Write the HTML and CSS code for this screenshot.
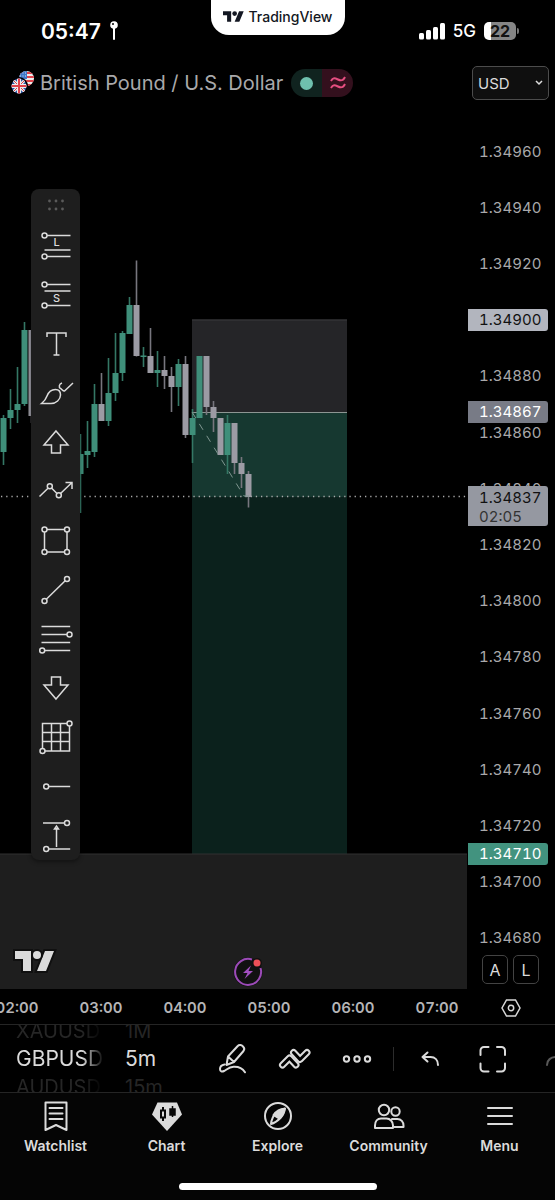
FILE: index.html
```html
<!DOCTYPE html>
<html lang="en">
<head>
<meta charset="utf-8">
<meta name="viewport" content="width=device-width, initial-scale=1">
<title>GBPUSD chart</title>
<link rel="stylesheet" href="styles.css">
</head>
<body>
<div class="app">
  <header class="status">
    <div class="status-side">
      <span class="clock">05:47</span>
      <svg class="pin" width="10" height="20" viewBox="0 0 10 20"><circle cx="5" cy="4" r="3.8" fill="#fff"/><circle cx="4" cy="3" r="1" fill="#000"/><path d="M5 7v11" stroke="#fff" stroke-width="2" stroke-linecap="round"/></svg>
    </div>
    <div class="brand">
      <svg width="21" height="11" viewBox="0 4 36 18" fill="#131722"><path d="M14 22H7V11H0V4h14zM28 22h-8l7.500-18h8z"/><circle cx="20" cy="8" r="4"/></svg>
      <span>TradingView</span>
    </div>
    <div class="status-side status-right">
      <svg width="26" height="17" viewBox="0 0 26 17" fill="#fff"><rect x="0" y="10" width="5" height="6.500" rx="1.500"/><rect x="7" y="7" width="5" height="9.500" rx="1.500"/><rect x="14" y="4" width="5" height="12.500" rx="1.500"/><rect x="21" y="0" width="5" height="16.500" rx="1.500"/></svg>
      <span class="network">5G</span>
      <span class="battery">22</span>
    </div>
  </header>

  <div class="symbol">
    <svg class="flags" width="24" height="26" viewBox="0 0 24 26">
      <defs>
        <clipPath id="us"><circle cx="15.500" cy="8.500" r="7.500"/></clipPath>
        <clipPath id="gb"><circle cx="8" cy="16" r="7.500"/></clipPath>
      </defs>
      <g clip-path="url(#us)"><rect width="24" height="20" fill="#eee"/><path d="M8 3h16M8 7h16M8 11h16M8 15h16" stroke="#e0434c" stroke-width="2"/><rect x="7" y="0" width="9" height="9" fill="#3f78c9"/><path d="M9 3h6M9 6h6" stroke="#cfe0f5" stroke-dasharray="1 1.500"/></g>
      <circle cx="8" cy="16" r="9" fill="#000"/>
      <g clip-path="url(#gb)"><rect y="8" width="16" height="16" fill="#2d55a5"/><path d="M0 8l16 16M16 8L0 24" stroke="#eee" stroke-width="3"/><path d="M0 8l16 16M16 8L0 24" stroke="#d8434c"/><path d="M8 8v16M0 16h16" stroke="#eee" stroke-width="4"/><path d="M8 8v16M0 16h16" stroke="#e0434c" stroke-width="2"/></g>
    </svg>
    <h1 class="symbol-name">British Pound / U.S. Dollar</h1>
    <div class="market">
      <span class="market-open"><i class="dot"></i></span>
      <span class="market-type"><svg width="16" height="14" viewBox="0 0 16 14" fill="none" stroke="#e54e80" stroke-width="2"><path d="M1 5C3 1 5 2 8 3.500S13 5 15 1M1 12c2-4 4-3 7-1.500s5 1.500 7-2.500"/></svg></span>
    </div>
    <label class="currency">
      <select aria-label="Currency"><option>USD</option></select>
      <svg width="8" height="6" viewBox="0 0 8 6" fill="none" stroke="#ddd" stroke-width="1.500"><path d="M1 1l3 3 3-3"/></svg>
    </label>
  </div>

  <main class="chart">
    <div class="plot">
      <svg class="canvas" width="100%" height="100%" fill="none">
        <g transform="translate(0 -104)">
          <rect y="854" width="100%" height="135" fill="#1e1e1e"/>
          <path d="M192 319.500h155V412H192z" fill="#252528"/>
          <path d="M192 320h155" stroke="#3a3a3d"/>
          <path d="M192 412h155v85H192z" fill="#163830"/>
          <path d="M192 497h155v357H192z" fill="#0b211c"/>
          <line x1="0" y1="854" x2="100%" y2="854" stroke="#303030"/>
          <path d="M192 412.500h155" stroke="#8d9693"/>
          <line x1="1" y1="496.500" x2="100%" y2="496.500" stroke="#aaa" stroke-width="1.300" stroke-dasharray="1.300 3.900"/>
          <path stroke="#347765" stroke-width="1.600" d="M3.500 415v50M10.500 389v40M17.500 367v56M24.500 322v84M80.500 434v79M87.500 421v47M94.500 384v73M108.500 358v68M115.500 333v68M122.500 331v50M129.500 297v37M143.500 347v20M157.500 351v36M178.500 359v47M192.500 409v54M227.500 415v59"/>
          <path stroke="#3f8f7a" stroke-width="6" d="M3.500 418v34M10.500 410v8M17.500 404v6M24.500 330v74M80.500 454v20M87.500 451v4M94.500 404v48M108.500 393v28M115.500 373v20M122.500 333v40M129.500 305v29M143.500 355.500v1.500M157.500 370v3M178.500 364v23M192.500 418v17M199.500 356v62M227.500 423v32"/>
          <path stroke="#77767e" stroke-width="1.600" d="M31.500 330v93M101.500 373v48M136.500 260.500v96M150.500 328v45M164.500 356v33M171.500 367v45M185.500 356v82M206.500 356v59M213.500 401v31M234.500 423v51M241.500 457v31M248.500 471v36.500"/>
          <path stroke="#9c9ba4" stroke-width="6" d="M31.500 330v86M101.500 404v17M136.500 305v51M150.500 356v17M164.500 370v6M171.500 376v11M185.500 364v71M206.500 356v51M213.500 407v11M220.500 418v37M234.500 423v40M241.500 463v11M248.500 474v23"/>
          <path d="M192 412l52 84h5" stroke="#7f9690" stroke-dasharray="7 7"/>
        </g>
      </svg>
      <svg class="watermark" width="45" height="26" viewBox="-3 -3 45 26"><g fill="#dbdbdb" stroke="#101010" stroke-width="4" paint-order="stroke"><path d="M16 20H8V8H0V0h16zM31 20h-9l8-20h9z"/><circle cx="22" cy="4" r="4"/></g></svg>
      <svg class="spark" width="32" height="32" viewBox="0 0 32 32" fill="none"><circle cx="16" cy="16" r="14.500" fill="#111"/><path d="M20 3.500A13 13 0 1 0 28.500 12" stroke="#9c4bb8" stroke-width="2"/><path d="M19 9.500l-8 7.500h4.500l-3 6 8.500-8h-4.500z" fill="#a24fc0"/><circle cx="25" cy="7" r="5" fill="#111"/><circle cx="25" cy="7" r="3.500" fill="#ee5058"/></svg>

      <div class="tools" role="toolbar" aria-label="Drawing tools">
        <div class="grip"><svg width="18" height="12" viewBox="0 0 18 12" fill="#5a5a5a"><circle cx="2.500" cy="2" r="1.400"/><circle cx="9" cy="2" r="1.400"/><circle cx="15.500" cy="2" r="1.400"/><circle cx="2.500" cy="10" r="1.400"/><circle cx="9" cy="10" r="1.400"/><circle cx="15.500" cy="10" r="1.400"/></svg></div>
        <button aria-label="Long position"><svg class="icon" viewBox="0 0 34 34"><circle cx="5.500" cy="6.500" r="2.500"/><circle cx="5.500" cy="27.500" r="2.500"/><path d="M8 6.500h23.500M5.500 21h26M8 27.500h23.500"/><text class="icon-letter" x="17.500" y="17">L</text></svg></button>
        <button aria-label="Short position"><svg class="icon" viewBox="0 0 34 34"><circle cx="5.500" cy="6.500" r="2.500"/><circle cx="5.500" cy="27.500" r="2.500"/><path d="M8 6.500h23.500M5.500 13h26M8 27.500h23.500"/><text class="icon-letter" x="17.500" y="24">S</text></svg></button>
        <button aria-label="Text"><svg class="icon" viewBox="0 0 34 34"><path d="M8 10V6h19v4M17.500 6v22M14.500 28h6"/></svg></button>
        <button aria-label="Brush"><svg class="icon" viewBox="0 0 34 34"><path d="M2.500 27.500H12c5 0 9.500-4 9.500-8.500 0-3.500-2-5.500-5-5.500-5 0-7 2.500-8.500 6.500-1 3-3 5.500-5.500 7.500zM23 7c-3 1-3.500 4-1.500 5.500 1.500.5 2 2.500 4 2.500L34 7"/></svg></button>
        <button aria-label="Arrow up"><svg class="icon" viewBox="0 0 34 34"><path d="M17 6l12 14h-7.500v8h-9v-8H5z"/></svg></button>
        <button aria-label="Path"><svg class="icon" viewBox="0 0 34 34"><circle cx="10.800" cy="12.300" r="2.500"/><circle cx="19.800" cy="21.300" r="2.500"/><path d="M.5 22.500L9 14.200M12.500 14l5.500 5.500M21.500 19.500L33 8.500M26.500 8.500H33V15"/></svg></button>
        <button aria-label="Rectangle"><svg class="icon" viewBox="0 0 34 34"><circle cx="5.500" cy="5.500" r="2.500"/><circle cx="28" cy="5.500" r="2.500"/><circle cx="5.500" cy="28" r="2.500"/><circle cx="28" cy="28" r="2.500"/><path d="M8 5.500h17.500M8 28h17.500M5.500 8v17.500M28 8v17.500"/></svg></button>
        <button aria-label="Trend line"><svg class="icon" viewBox="0 0 34 34"><circle cx="5.500" cy="28" r="2.500"/><circle cx="28" cy="6" r="2.500"/><path d="M7.300 26.200L26.200 7.800"/></svg></button>
        <button aria-label="Fib retracement"><svg class="icon" viewBox="0 0 34 34"><circle cx="30.500" cy="12.500" r="2.500"/><circle cx="3.200" cy="28.500" r="2.500"/><path d="M2.500 4.500h28.700M2.500 12.500H28M2.500 20.500h28.700M5.700 28.500h25.500"/></svg></button>
        <button aria-label="Arrow down"><svg class="icon" viewBox="0 0 34 34"><path d="M17 28l12-14h-7.500V6h-9v8H5z"/></svg></button>
        <button aria-label="Gann box"><svg class="icon" viewBox="0 0 34 34"><path d="M3.500 28.500v-25H28M30.500 6v25H6M3.500 12.500h27M3.500 21.500h27M12.500 3.500V31M21.500 3.500V31"/><circle cx="30.500" cy="3.500" r="2.500"/><circle cx="3.500" cy="31" r="2.500"/></svg></button>
        <button aria-label="Horizontal ray"><svg class="icon" viewBox="0 0 34 34"><circle cx="7.200" cy="17.500" r="2.500"/><path d="M9.700 17.500h21.500"/></svg></button>
        <button aria-label="Price range"><svg class="icon" viewBox="0 0 34 34"><circle cx="28" cy="5" r="2.500"/><circle cx="7.200" cy="31" r="2.500"/><path d="M4 5h21.500M9.700 31h21.500M17.500 29V10M15.500 11l2-3 2 3z"/></svg></button>
      </div>
    </div>

    <aside class="axis">
      <span>1.34960</span><span>1.34940</span><span>1.34920</span><span>1.34900</span><span>1.34880</span>
      <span>1.34860</span><span>1.34840</span><span>1.34820</span><span>1.34800</span><span>1.34780</span>
      <span>1.34760</span><span>1.34740</span><span>1.34720</span><span>1.34700</span><span>1.34680</span>
      <div class="tag tag-stop">1.34900</div>
      <div class="tag tag-entry">1.34867</div>
      <div class="tag tag-last">1.34837<br><span class="countdown">02:05</span></div>
      <div class="tag tag-target">1.34710</div>
      <div class="scale"><button>A</button><button>L</button></div>
    </aside>
  </main>

  <div class="time">
    <div class="time-labels"><span>02:00</span><span>03:00</span><span>04:00</span><span>05:00</span><span>06:00</span><span>07:00</span></div>
    <button class="time-settings" aria-label="Time axis settings"><svg width="20" height="18" viewBox="0 0 20 18" fill="none" stroke="#d8d8d8" stroke-width="1.500"><path d="M5.500 1h9l4.500 8-4.500 8h-9L1 9z"/><circle cx="10" cy="9" r="2.700"/></svg></button>
  </div>

  <div class="toolbar">
    <div class="wheel wheel-symbol"><span class="far">XAUUSD</span><span>GBPUSD</span><span class="far">AUDUSD</span></div>
    <div class="wheel wheel-interval"><span class="far">1M</span><span>5m</span><span class="far">15m</span></div>
    <button aria-label="Draw"><svg class="icon bold" viewBox="0 0 34 34"><path d="M12 14.500l9.500-10.300c1.800-1.800 4-1.200 5.500.3s1.700 3 .5 4.500L18 20l-7.500 3zM12 14.500l6 5.500M8.500 22.500c-3 .5-4.500 2.500-4.500 4.500 0 2.500 2 3 4 2 3-1.500 5-4 9.500-4.200 5-.3 9 1.700 11.500 5.500"/></svg></button>
    <button aria-label="Indicators"><svg class="icon" viewBox="0 0 34 34" stroke-linecap="round" stroke-linejoin="round"><g stroke-width="7"><path d="M4.500 23l7-7 6.500 7"/><path d="M15.500 10.500l6.500 7 7-7"/></g><g class="hollow" stroke-width="3"><path d="M4.500 23l7-7 6.500 7"/><path d="M15.500 10.500l6.500 7 7-7"/></g></svg></button>
    <button aria-label="More"><svg class="icon bold" viewBox="0 0 34 34"><circle cx="6.500" cy="17" r="2.700"/><circle cx="17" cy="17" r="2.700"/><circle cx="27.500" cy="17" r="2.700"/></svg></button>
    <i class="divider"></i>
    <button aria-label="Undo"><svg class="icon bold" viewBox="0 0 34 34"><path d="M14.500 10.500l-5 4.500 5 4.500M9.500 15h8c4.500 0 7.500 3 7.500 8"/></svg></button>
    <button aria-label="Full screen"><svg class="icon bold" viewBox="0 0 34 34"><path d="M5.500 13V8.500a3.500 3.500 0 0 1 3.500-3.500h4.500M22 5h4.500A3.500 3.500 0 0 1 30 8.500V13M30 21.500V26a3.500 3.500 0 0 1-3.500 3.500H22M13.500 29.500H9A3.500 3.500 0 0 1 5.500 26v-4.500"/></svg></button>
    <button class="dim" aria-label="Redo"><svg class="icon bold" viewBox="0 0 34 34"><path d="M19.500 10.500l5 4.500-5 4.500M24.500 15h-6C14 15 10 18 10 23"/></svg></button>
  </div>

  <nav class="tabs">
    <a href="#watchlist"><svg class="icon bold" viewBox="0 0 34 34"><path d="M6.500 3.500h21V31L17 26 6.500 31zM10.500 9h13M10.500 14.500h13M10.500 20h13"/></svg>Watchlist</a>
    <a href="#chart"><svg class="icon" viewBox="0 0 34 34"><path d="M7.500 3.500h19.500l5 12L17 32 2 15.500z" fill="#dbdbdb" stroke="none"/><path d="M11 11.500h4v7h-4zM13 8v3M13 19v3" stroke="#080808" stroke-width="2"/><path d="M20 10h5v6h-5zM22.500 7v11" fill="#080808" stroke="#080808"/></svg>Chart</a>
    <a href="#explore"><svg class="icon bold" viewBox="0 0 34 34"><circle cx="17" cy="17" r="13"/><path d="M10 25c.5-5 2-8 5-11 3-2.500 5.500-3.500 9-4.500-.5 4-1.500 6.500-4.500 9.500S14 24 10 25z"/><path d="M12.500 16c3-4 7-6 11-6.200-.5 3.500-2 7-5.500 9.700z" fill="#dbdbdb"/></svg>Explore</a>
    <a href="#community"><svg class="icon bold" viewBox="0 0 34 34"><circle cx="12" cy="11" r="5.200"/><circle cx="23.500" cy="12.500" r="4.200"/><path d="M3 29v-2.500c0-4 2.500-7 6-7h5.500c3.500 0 6.500 3 6.500 7V29zM20 20h5.500c3.500 0 6 3 6 6.500V28H21"/></svg>Community</a>
    <a href="#menu"><svg class="icon bold" viewBox="0 0 34 34"><path d="M5 9h24M5 17h24M5 25h24"/></svg>Menu</a>
  </nav>
  <div class="home"><i></i></div>
</div>
</body>
</html>
```
FILE: styles.css
```css
* { box-sizing: border-box; }
body { margin: 0; background: #000; color: #dbdbdb; font-family: Inter, "Liberation Sans", sans-serif; }
button { padding: 0; border: 0; background: none; color: inherit; font: inherit; display: flex; align-items: center; justify-content: center; }
svg { display: block; flex: none; }
.app { min-height: 100vh; display: flex; flex-direction: column; overflow: hidden; }

.icon { width: 34px; height: 34px; fill: none; stroke: #dbdbdb; stroke-width: 1.5; overflow: visible; }
.bold { stroke-width: 2; stroke-linecap: round; stroke-linejoin: round; }
.icon-letter { fill: #dbdbdb; stroke: none; font-size: 11px; font-weight: 500; text-anchor: middle; }
.hollow { stroke: #000; }

.status { height: 62px; display: grid; grid-template-columns: 1fr 134px 1fr; align-items: start; }
.status-side { height: 62px; display: flex; align-items: center; padding-left: 41px; gap: 8px; color: #fff; }
.status-right { justify-content: flex-end; padding: 0 39px 0 0; }
.clock { font-size: 21px; font-weight: 600; }
.brand { height: 35px; border-radius: 0 0 18px 18px; background: #fff; color: #131722; display: flex; align-items: center; justify-content: center; gap: 5px; padding-bottom: 3px; font-size: 14px; font-weight: 500; }
.network { font-size: 17px; font-weight: 500; }
.battery { position: relative; width: 32px; height: 18px; border-radius: 5px; background: linear-gradient(90deg, #fff 22%, #858585 22%); color: #111; font-size: 16px; line-height: 18px; font-weight: 700; text-align: center; }
.battery::after { content: ""; position: absolute; left: 33px; top: 6px; width: 2px; height: 6px; border-radius: 0 2px 2px 0; background: #777; }

.symbol { height: 42px; display: flex; align-items: center; padding: 0 6px 0 11px; }
.symbol-name { margin: 0 8px 0 5px; font-size: 20px; font-weight: 400; color: #a9a9ab; white-space: nowrap; }
.market { display: flex; width: 62px; height: 28px; border-radius: 14px; overflow: hidden; }
.market span { flex: 1; display: flex; align-items: center; justify-content: center; }
.market-open { background: #10231f; }
.market-type { background: #33101d; }
.dot { width: 13px; height: 13px; border-radius: 50%; background: #6fc0ae; }
.currency { margin-left: auto; width: 77px; height: 34px; border: 1px solid #4c4c4c; border-radius: 5px; background: #0f0f0f; display: flex; align-items: center; padding: 0 5px; }
.currency select { flex: 1; min-width: 0; appearance: none; border: 0; background: none; padding: 0; color: #dbdbdb; font: 400 15px Inter, sans-serif; }

.chart { flex: 1; display: grid; grid-template-columns: 1fr 88px; }
.plot { position: relative; }
.canvas { position: absolute; inset: 0; }
.watermark { position: absolute; left: 12px; bottom: 15px; }
.spark { position: absolute; left: 232px; bottom: 1px; }
.tools { position: absolute; left: 31px; top: 85px; width: 49px; height: 671px; border-radius: 8px; background: #1e1e1e; box-shadow: 0 2px 4px #0006; display: flex; flex-direction: column; }
.grip { height: 32px; display: flex; align-items: center; justify-content: center; }
.tools button { flex: 1; }

.axis { position: relative; display: flex; flex-direction: column; padding: 19px 0 23px 12px; font-size: 15px; font-variant-numeric: tabular-nums; color: #a9a9ab; }
.axis > span { flex: 1; display: flex; align-items: center; }
.tag { position: absolute; left: 1px; width: 80px; padding-left: 11px; line-height: 22px; border-radius: 0 3px 3px 0; }
.tag-stop { top: 205px; background: #b2b5be; color: #111; }
.tag-entry { top: 297px; background: #787b86; color: #fff; }
.tag-last { top: 382px; padding-top: 2px; line-height: 19px; background: #9598a1; color: #111; }
.tag-target { top: 739px; background: #42937f; color: #fff; }
.countdown { color: #333; }
.scale { position: absolute; left: 15px; bottom: 5px; display: flex; gap: 5px; }
.scale button { width: 26px; height: 29px; border: 1px solid #434343; border-radius: 5px; color: #dbdbdb; font-size: 16px; }

.time { height: 36px; display: grid; grid-template-columns: 1fr 88px; padding-top: 2px; border-bottom: 1px solid #252525; }
.time-labels { display: flex; align-items: center; overflow: hidden; margin-left: -25px; font-size: 15px; font-weight: 600; font-variant-numeric: tabular-nums; color: #b5b5b7; }
.time-labels span { flex: none; width: 84px; text-align: center; }

.toolbar { height: 68px; display: flex; overflow: hidden; align-items: center; padding-left: 16px; border-bottom: 1px solid #252525; }
.toolbar button { flex: none; width: 62px; height: 62px; }
.wheel { flex: none; height: 67px; display: flex; flex-direction: column; justify-content: center; overflow: hidden; font-size: 21px; line-height: 28px; }
.wheel span { flex: none; }
.wheel .far { color: #262626; font-size: 20px; }
.wheel-symbol { width: 88px; margin-right: 21px; mask-image: linear-gradient(90deg, #000 75%, transparent); }
.wheel-interval { width: 77px; }
.divider { flex: none; width: 1px; height: 24px; margin: 0 5px; background: #2c2c2c; }
.dim { opacity: .4; }

.tabs { display: grid; grid-template-columns: repeat(5, 1fr); height: 76px; background: #050505; }
.tabs a { display: flex; flex-direction: column; align-items: center; gap: 3px; padding-top: 6px; color: #dbdbdb; text-decoration: none; font-size: 14px; line-height: 20px; font-weight: 600; }
.home { height: 31px; display: flex; justify-content: center; padding-top: 14px; background: #050505; }
.home i { width: 198px; height: 7px; border-radius: 4px; background: #fff; }
```
